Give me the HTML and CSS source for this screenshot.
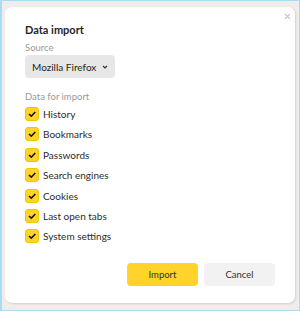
FILE: index.html
```html
<!DOCTYPE html>
<html lang="en">
<head>
<meta charset="UTF-8" />
<title>Data import</title>
<link rel="stylesheet" href="styles.css">
</head>
<body>
  <div class="frame">
    <div class="dialog">
      <div class="close" title="Close">
        <svg width="7" height="7" viewBox="0 0 7 7"><path d="M1 1L6 6M6 1L1 6" stroke="#c8c8c8" stroke-width="1.2"/></svg>
      </div>

      <div class="title">Data import</div>

      <div class="label">Source</div>
      <div class="select">
        <span>Mozilla Firefox</span>
        <svg width="6" height="4" viewBox="0 0 6 4"><path d="M1 1L3 3L5 1" fill="none" stroke="#333" stroke-width="1.2"/></svg>
      </div>

      <div class="label label-data">Data for import</div>
      <div class="checks">
        <label class="check"><span class="box"></span>History</label>
        <label class="check"><span class="box"></span>Bookmarks</label>
        <label class="check"><span class="box"></span>Passwords</label>
        <label class="check"><span class="box"></span>Search engines</label>
        <label class="check"><span class="box"></span>Cookies</label>
        <label class="check"><span class="box"></span>Last open tabs</label>
        <label class="check"><span class="box"></span>System settings</label>
      </div>

      <div class="actions">
        <div class="btn btn-primary">Import</div>
        <div class="btn">Cancel</div>
      </div>
    </div>
  </div>
</body>
</html>
```

FILE: styles.css
```css
body {
  margin: 0;
  font-family: Lato, "Noto Sans", sans-serif;
  color: #222;
}

.frame {
  width: 300px;
  height: 311px;
  box-sizing: border-box;
  border: 1px solid #a9dcf3;
  border-left-width: 2px;
  background: #eeedec;
  padding: 6px 4px 6px 3px;
}

.dialog {
  position: relative;
  height: 296px;
  background: #fff;
  border-radius: 7px;
  box-shadow: 1px 1px 2px rgba(0,0,0,0.12);
  padding: 15px 20px 0 20px;
  box-sizing: border-box;
}

.close {
  position: absolute;
  top: 6px;
  right: 4px;
  width: 7px;
  height: 7px;
  display: flex;
}

.title {
  font-size: 11px;
  font-weight: bold;
  line-height: 16px;
  color: #1f1f1f;
}

.label {
  margin-top: 4px;
  font-size: 9.5px;
  line-height: 12px;
  color: #9a9a9a;
}

.label-data {
  margin-top: 13px;
}

.select {
  margin-top: 1px;
  display: inline-flex;
  align-items: center;
  gap: 6px;
  height: 23px;
  padding: 0 7px 0 7px;
  background: #e7e7e7;
  border-radius: 4px;
  font-size: 10px;
  color: #1f1f1f;
}

.checks {
  margin-top: 3px;
  display: flex;
  flex-direction: column;
  gap: 4.4px;
}

.check {
  display: flex;
  align-items: center;
  gap: 4px;
  height: 16px;
  font-size: 10px;
  color: #2b2b2b;
}

.box {
  width: 14px;
  height: 14px;
  box-sizing: border-box;
  border: 1px solid #f3c400;
  border-radius: 3px;
  background: #fed42b url("data:image/svg+xml,%3Csvg xmlns='http://www.w3.org/2000/svg' width='12' height='12'%3E%3Cpath d='M3 6L5.3 8.2L9.3 4' fill='none' stroke='%23111' stroke-width='1.6'/%3E%3C/svg%3E") no-repeat center;
}

.actions {
  display: flex;
  justify-content: flex-end;
  gap: 6px;
  margin-top: 18.5px;
}

.btn {
  width: 71px;
  height: 23px;
  border-radius: 4px;
  background: #f2f2f2;
  font-size: 9.5px;
  color: #333;
  display: flex;
  align-items: center;
  justify-content: center;
}

.btn-primary {
  background: #fed42b;
}
```
